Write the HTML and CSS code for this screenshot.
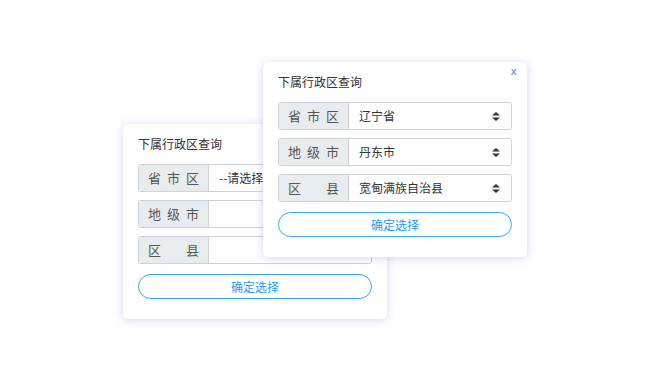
FILE: index.html
```html
<!DOCTYPE html>
<html lang="zh-CN">
<head>
  <meta charset="utf-8">
  <title>下属行政区查询</title>
  <link rel="stylesheet" href="styles.css">
</head>
<body>
  <div class="stage">

    <!-- Back panel, nothing chosen yet -->
    <div class="panel panel-back">
      <div class="panel-title">下属行政区查询</div>
      <div class="field">
        <span class="field-label">省 市 区</span>
        <div class="field-select">
          <span class="field-value">--请选择</span>
          <svg class="caret" width="8" height="9" viewBox="0 0 8 9"><path d="M4 0L8 3.6H0Z M4 9L8 5.4H0Z" fill="#333"/></svg>
        </div>
      </div>
      <div class="field">
        <span class="field-label">地 级 市</span>
        <div class="field-select">
          <span class="field-value"></span>
          <svg class="caret" width="8" height="9" viewBox="0 0 8 9"><path d="M4 0L8 3.6H0Z M4 9L8 5.4H0Z" fill="#333"/></svg>
        </div>
      </div>
      <div class="field">
        <span class="field-label">区 县</span>
        <div class="field-select">
          <span class="field-value"></span>
          <svg class="caret" width="8" height="9" viewBox="0 0 8 9"><path d="M4 0L8 3.6H0Z M4 9L8 5.4H0Z" fill="#333"/></svg>
        </div>
      </div>
      <button class="confirm">确定选择</button>
    </div>

    <!-- Front panel, filled in -->
    <div class="panel panel-front">
      <span class="close">x</span>
      <div class="panel-title">下属行政区查询</div>
      <div class="field">
        <span class="field-label">省 市 区</span>
        <div class="field-select">
          <span class="field-value">辽宁省</span>
          <svg class="caret" width="8" height="9" viewBox="0 0 8 9"><path d="M4 0L8 3.6H0Z M4 9L8 5.4H0Z" fill="#333"/></svg>
        </div>
      </div>
      <div class="field">
        <span class="field-label">地 级 市</span>
        <div class="field-select">
          <span class="field-value">丹东市</span>
          <svg class="caret" width="8" height="9" viewBox="0 0 8 9"><path d="M4 0L8 3.6H0Z M4 9L8 5.4H0Z" fill="#333"/></svg>
        </div>
      </div>
      <div class="field">
        <span class="field-label">区 县</span>
        <div class="field-select">
          <span class="field-value">宽甸满族自治县</span>
          <svg class="caret" width="8" height="9" viewBox="0 0 8 9"><path d="M4 0L8 3.6H0Z M4 9L8 5.4H0Z" fill="#333"/></svg>
        </div>
      </div>
      <button class="confirm">确定选择</button>
    </div>

  </div>
</body>
</html>
```

FILE: styles.css
```css
html, body {
  margin: 0;
  height: 100%;
}

body {
  background-color: #fff;
  font-family: "Noto Sans CJK SC", "Noto Sans", sans-serif;
  font-size: 12px;
  color: #333;
}

.stage {
  position: relative;
  width: 650px;
  height: 380px;
}

/* panels float over the page like little windows */
.panel {
  position: absolute;
  width: 264px;
  box-sizing: border-box;
  padding: 10px 15px 20px;
  background-color: #fff;
  border-radius: 5px;
  box-shadow: 0 1px 9px rgba(85, 95, 240, 0.27);
}

.panel-back {
  left: 123px;
  top: 124px;
}

.panel-front {
  left: 263px;
  top: 62px;
}

.panel-title {
  height: 20px;
  line-height: 20px;
  margin-bottom: 10px;
  color: #333;
}

.close {
  position: absolute;
  right: 10px;
  top: 3px;
  font-family: "DejaVu Sans", sans-serif;
  font-size: 11px;
  color: #6b86c9;
}

.field {
  display: flex;
  height: 28px;
  box-sizing: border-box;
  border: 1px solid #d0d3d7;
  border-radius: 3px;
  margin-bottom: 8px;
  overflow: hidden;
}

.field:last-of-type {
  margin-bottom: 10px;
}

.field-label {
  width: 70px;
  box-sizing: border-box;
  padding: 0 9px 0 9px;
  background-color: #e9ecef;
  border-right: 1px solid #d0d3d7;
  color: #555;
  line-height: 26px;
  text-align: justify;
  text-align-last: justify;
  font-size: 13px;
}

.field-select {
  flex: 1;
  display: flex;
  align-items: center;
  justify-content: space-between;
  padding: 0 10px;
  line-height: 26px;
  color: #333;
}

.caret {
  display: block;
  margin-right: 1px;
}

.confirm {
  display: block;
  width: 100%;
  height: 25px;
  padding: 0;
  background-color: #fff;
  border: 1px solid #3aa6ee;
  border-radius: 13px;
  font-family: inherit;
  font-size: 12px;
  color: #1e9cf0;
}
```
